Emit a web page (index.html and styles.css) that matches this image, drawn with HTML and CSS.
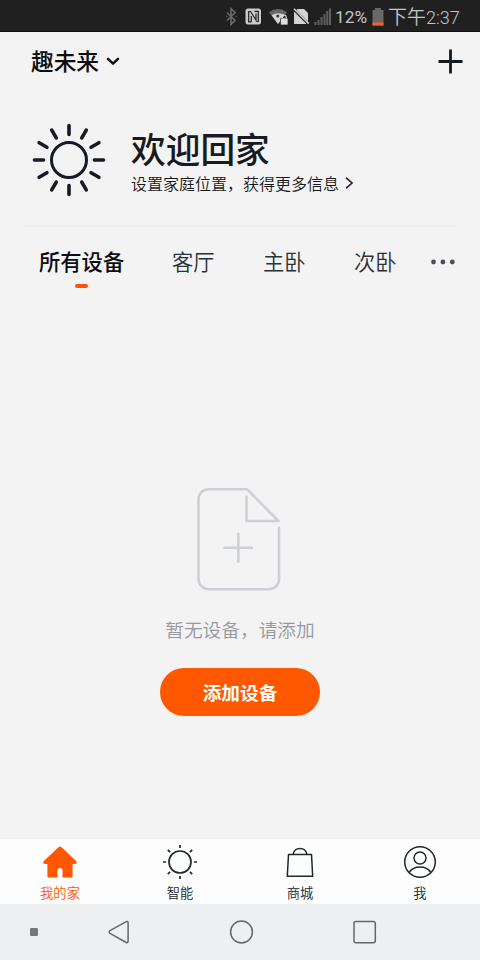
FILE: index.html
```
<!DOCTYPE html>
<html lang="zh-CN">
<head>
<meta charset="utf-8">
<meta name="viewport" content="width=device-width, initial-scale=1">
<title>我的家</title>
<link rel="stylesheet" href="styles.css">
</head>
<body>
<div class="screen">
  <div class="status">
    <svg class="status-icons" width="120" height="31" viewBox="215 0 120 31" fill="none">
      <path d="M227 12.500l8 8-4 3.800V8.700l4 3.800-8 8M227.300 16.500h-1M235.700 16.500h1" stroke="#686868" stroke-width="1.700"/>
      <rect x="245.500" y="8.500" width="15.500" height="16" rx="2.500" fill="#c9c9c9"/>
      <path d="M251.300 21.800H248.700V11.500H250.500L256 20V13.500M251.300 21.800V16M254.500 11.300H258.300V21.500H256.500" stroke="#202020" stroke-width="1.200"/>
      <path d="M269 12.300Q278 5.500 287 12.300L278 24z" fill="#686868"/>
      <path d="M271.600 15.200Q278 11.500 284.700 15L278 24z" fill="#d4d4d4"/>
      <circle cx="277.800" cy="16" r="1.500" fill="#333"/>
      <rect x="280.500" y="18" width="7.500" height="7" rx="1" fill="#ddd" stroke="#202020" stroke-width=".7"/>
      <path d="M282.500 18v-1.200a1.800 1.800 0 0 1 3.600 0V18" stroke="#ddd" stroke-width="1.200"/>
      <path d="M297.500 9H304L308 13V21.500L296.500 10z" fill="#d4d4d4"/>
      <path d="M294 11.500L306.500 24H294z" fill="#d4d4d4"/>
      <path d="M294 8.800L308.800 23.600" stroke="#d4d4d4" stroke-width="1.500"/>
      <path d="M315.500 22v3M318.500 20v5M321.500 17v8M324.500 14v11M327.300 11v14M330 8.500V25" stroke="#606060" stroke-width="2"/>
    </svg>
    <span class="percent">12%</span>
    <svg class="battery" width="12" height="18" viewBox="0 0 12 18"><path d="M3 0h6v2h2.500v15.500H.5V2H3z" fill="#686868"/><path d="M.5 14.500h11V17.500H.5z" fill="#f26322"/></svg>
    <span class="clock">下午<span class="digits">2:37</span></span>
  </div>

  <header class="header">
    <span class="home-name">趣未来</span>
    <svg class="caret" width="14" height="9" viewBox="0 0 14 9" fill="none" stroke="#111318" stroke-width="2.500" stroke-linecap="round" stroke-linejoin="round"><path d="M2 1.800l5 4.900 5-4.900"/></svg>
    <svg class="add" width="26" height="26" viewBox="0 0 26 26" stroke="#15181d" stroke-width="2.800"><path d="M1.500 12.500h24M13.500 .5v24"/></svg>
  </header>

  <section class="hero">
    <svg class="sun" width="74" height="74" viewBox="-37 -37 74 74" fill="none" stroke="#181a25" stroke-width="3.600" stroke-linecap="round">
      <circle r="17.500" stroke-width="3"/>
      <path id="rays" d="M0-34.500V-25.500M0 25.500V34.500M-34.500 0h9M25.500 0h9"/>
      <use href="#rays" transform="rotate(30)"/>
      <use href="#rays" transform="rotate(60)"/>
    </svg>
    <div class="welcome">
      <h1>欢迎回家</h1>
      <p>设置家庭位置，获得更多信息<svg width="9" height="12" viewBox="0 0 9 12" fill="none" stroke="#1b1d24" stroke-width="1.600" stroke-linecap="round"><path d="M1.500 1.200L7 6l-5.500 4.800"/></svg></p>
    </div>
  </section>

  <nav class="rooms">
    <span class="room active">所有设备</span>
    <span class="room">客厅</span>
    <span class="room">主卧</span>
    <span class="room">次卧</span>
    <svg width="24" height="6" viewBox="0 0 24 6" fill="#4b4f55"><circle cx="2.500" cy="3" r="2.400"/><circle cx="11.900" cy="3" r="2.400"/><circle cx="21.300" cy="3" r="2.400"/></svg>
  </nav>

  <main class="empty">
    <svg width="86" height="104" viewBox="0 0 86 104" fill="none" stroke="#cdd0d5" stroke-width="2.600" stroke-linecap="round" stroke-linejoin="round"><path d="M82 41v51.500a10 10 0 0 1-10 10H11.500a10 10 0 0 1-10-10v-80a10 10 0 0 1 10-10H50L81.500 34.300H49.500V10M27.500 61h27.500M41.300 47.200v27.500" transform="translate(0 -.3)"/></svg>
    <p>暂无设备，请添加</p>
    <button>添加设备</button>
  </main>

  <nav class="tabs">
    <div class="tab current">
      <svg width="36" height="36" viewBox="0 0 36 36"><path d="M16.500 3.200Q18 1.900 19.500 3.200L34.200 17Q35.600 19.600 33 20h-2.400v12.200q0 1.300-1.300 1.300h-8.800V26.500q0-2.600-2.500-2.600t-2.500 2.600v7H6.700q-1.300 0-1.300-1.300V20H3Q.4 19.600 1.800 17z" fill="#ff5800"/></svg>
      <span>我的家</span>
    </div>
    <div class="tab">
      <svg width="36" height="36" viewBox="-18 -18 36 36" fill="none" stroke="#20282d" stroke-width="1.700"><circle r="11"/><path d="M0-17v3M0 14v3M-17 0h3M14 0h3M-12.200-12.200l2.300 2.300M9.900 9.900l2.300 2.300M12.200-12.200l-2.300 2.300M-9.900 9.900l-2.300 2.300"/></svg>
      <span>智能</span>
    </div>
    <div class="tab">
      <svg width="36" height="36" viewBox="0 0 36 36" fill="none" stroke="#20282d" stroke-width="1.500" stroke-linejoin="round"><path d="M6.500 10.500h23l1.200 21.700H5.300zM11 10.500c1.500-8 12.500-8 14 0"/></svg>
      <span>商城</span>
    </div>
    <div class="tab">
      <svg width="36" height="36" viewBox="0 0 36 36" fill="none" stroke="#20282d" stroke-width="1.500"><circle cx="18" cy="18" r="15.300"/><circle cx="18" cy="14" r="6"/><path d="M7 28.500c5-7.300 17-7.300 22 0"/></svg>
      <span>我</span>
    </div>
  </nav>

  <div class="system-nav">
    <svg width="480" height="56" viewBox="0 0 480 56" fill="none" stroke="#666769" stroke-width="1.500" stroke-linejoin="round"><rect x="30" y="24" width="8" height="8" rx="1" fill="#777879" stroke="none"/><path d="M126.200 17.600L110 26.700q-1.800 1.300 0 2.600l16.200 9.200q1.900.7 1.900-1.500V19q0-2.100-1.900-1.400z"/><circle cx="241.500" cy="28" r="10.900"/><rect x="354" y="17.500" width="21.300" height="21.300" rx="2"/></svg>
  </div>
</div>
</body>
</html>
```
FILE: styles.css
```
* {
  box-sizing: border-box;
}

body {
  margin: 0;
  background: #f3f3f3;
  font-family: "Noto Sans CJK SC", sans-serif;
  color: #181a20;
}

h1,
p {
  margin: 0;
}

svg {
  display: block;
  flex: none;
}

.screen {
  width: 480px;
  height: 960px;
  display: flex;
  flex-direction: column;
  overflow: hidden;
}

.status {
  height: 32px;
  flex: none;
  display: flex;
  align-items: flex-start;
  padding-left: 215px;
  background: #202020;
  border-bottom: 1px solid #111;
  color: #c5c5c5;
  font-family: Roboto, "Noto Sans CJK SC", sans-serif;
  white-space: nowrap;
}

.percent {
  width: 37px;
  font-size: 17.3px;
  line-height: 35px;
}

.battery {
  margin: 8px 4px 0 0;
}

.clock {
  font-size: 19px;
  font-weight: 350;
  line-height: 35px;
}

.digits {
  font-size: 18px;
}

.header {
  height: 60px;
  flex: none;
  display: flex;
  align-items: center;
  padding: 0 17px 0 31px;
}

.home-name {
  margin-bottom: 2px;
  font-size: 22.7px;
  font-weight: 500;
  line-height: 34px;
  color: #0c0d10;
}

.caret {
  margin: 0 0 1px 7px;
}

.add {
  margin: 0 0 0 auto;
}

.hero {
  height: 135px;
  flex: none;
  display: flex;
  align-items: center;
  gap: 25px;
  margin: 0 24px;
  padding-left: 8px;
  border-bottom: 1px solid #eeeeee;
}

.sun {
  margin-top: 1px;
}

.welcome {
  padding-top: 5px;
}

.hero h1 {
  margin: -1px 0 2px;
  font-size: 34.7px;
  font-weight: 500;
  line-height: 42px;
}

.hero p {
  display: flex;
  align-items: center;
  gap: 6px;
  font-size: 16px;
  font-weight: 350;
  line-height: 25px;
}

.rooms {
  height: 70px;
  flex: none;
  display: flex;
  align-items: center;
  padding: 0 24px 0 39px;
}

.room {
  width: 91px;
  margin-bottom: 2px;
  font-size: 21.3px;
  font-weight: 350;
  line-height: 32px;
  color: #2b3138;
}

.room:nth-of-type(4) {
  width: 77px;
}

.active {
  position: relative;
  width: 133px;
  font-weight: 500;
  color: #0c0d10;
}

.active::after {
  content: "";
  position: absolute;
  left: 36px;
  top: 39px;
  width: 13px;
  height: 4px;
  border-radius: 2px;
  background: #ff5310;
}

.empty {
  flex: 1;
  display: flex;
  flex-direction: column;
  align-items: center;
  padding-top: 190px;
}

.empty p {
  margin: 24px 0 25px;
  font-size: 18.7px;
  font-weight: 350;
  line-height: 28px;
  color: #96989e;
}

.empty button {
  width: 160px;
  height: 48px;
  padding: 0 0 2px;
  border: 0;
  border-radius: 24px;
  background: #ff5800;
  color: #fff;
  font: 700 18.7px "Noto Sans CJK SC", sans-serif;
}

.tabs {
  height: 65px;
  flex: none;
  display: grid;
  grid-template-columns: repeat(4, 1fr);
  background: #fdfdfd;
}

.tab {
  display: flex;
  flex-direction: column;
  align-items: center;
  padding-top: 5px;
  font-size: 13.3px;
  font-weight: 350;
  line-height: 20px;
  color: #20242a;
}

.tab span {
  margin-top: 3px;
}

.current {
  color: #ff5800;
}

.system-nav {
  height: 56px;
  flex: none;
  background: #eeeff1;
}
```
